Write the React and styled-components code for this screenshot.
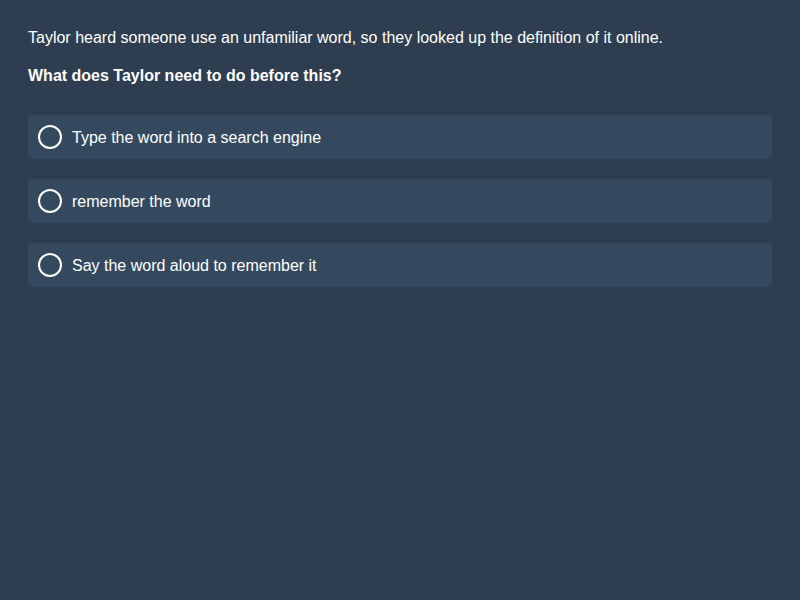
import styled, { createGlobalStyle } from 'styled-components'

const GlobalStyle = createGlobalStyle`
	html, body {
		margin: 0;
		padding: 0;
		background: #2e3d4f;
	}
	body {
		font-family: "Liberation Sans", Arial, sans-serif;
		color: #ffffff;
	}
`

const Page = styled.div`
	min-height: 600px;
	box-sizing: border-box;
	padding: 29px 28px 28px;
	background: #2e3d4f;
`

const Prompt = styled.p`
	margin: 0;
	font-size: 16px;
	line-height: 18px;
	font-weight: ${(props) => (props.bold ? 'bold' : 'normal')};
	margin-bottom: ${(props) => props.gap || 0}px;
`

const Options = styled.div`
	display: flex;
	flex-direction: column;
	gap: 20px;
`

const Option = styled.label`
	display: flex;
	align-items: center;
	gap: 10px;
	height: 44px;
	box-sizing: border-box;
	padding: 0 10px;
	background: #34495e;
	border-radius: 4px;
	font-size: 16px;
	cursor: pointer;
`

const Radio = styled.span`
	width: 24px;
	height: 24px;
	box-sizing: border-box;
	border: 2px solid #ffffff;
	border-radius: 50%;
	flex-shrink: 0;
`

const Text = styled.span`
	padding-top: 2px;
	line-height: 18px;
`

const answers = [
	'Type the word into a search engine',
	'remember the word',
	'Say the word aloud to remember it',
]

const App = () => {
	return (
		<Page>
			<GlobalStyle />
			<Prompt gap={20}>
				Taylor heard someone use an unfamiliar word, so they looked up the definition of it online.
			</Prompt>
			<Prompt bold gap={30}>
				What does Taylor need to do before this?
			</Prompt>
			<Options>
				{answers.map((a) => (
					<Option key={a}>
						<Radio />
						<Text>{a}</Text>
					</Option>
				))}
			</Options>
		</Page>
	)
}

export default App
